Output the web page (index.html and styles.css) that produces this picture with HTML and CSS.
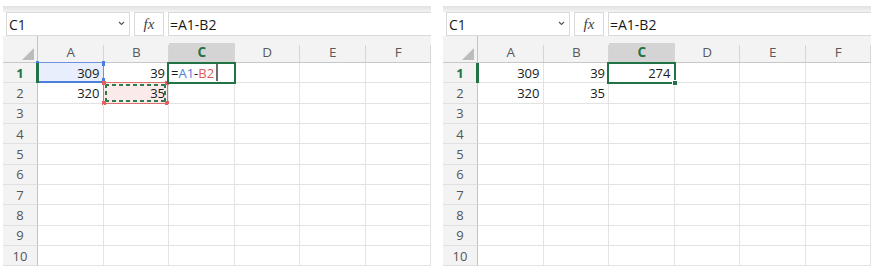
FILE: index.html
```html
<!DOCTYPE html>
<html lang="en">
<head>
  <meta charset="UTF-8" />
  <title>Formula =A1-B2</title>
  <link rel="stylesheet" href="styles.css">
</head>
<body>
  <div class="wrap">

    <!-- editing the formula -->
    <div class="panel">
      <div class="ribbon"></div>
      <div class="fbar">
        <div class="namebox">C1
          <svg class="chev" width="7" height="5" viewBox="0 0 7 5"><path d="M1 1l2.5 2.5L6 1" fill="none" stroke="#555" stroke-width="1.1"/></svg>
        </div>
        <div class="fx">fx</div>
        <div class="formula">=A1-B2</div>
      </div>
      <div class="sheet">
        <div class="row head">
          <div class="corner"></div>
          <div class="ch">A</div><div class="ch">B</div><div class="ch sel">C</div>
          <div class="ch">D</div><div class="ch">E</div><div class="ch">F</div>
        </div>
        <div class="row">
          <div class="rh sel">1</div>
          <div class="c ref-a">309
            <span class="box blue"><i class="tl"></i><i class="tr"></i><i class="bl"></i><i class="br"></i></span>
          </div>
          <div class="c">39</div>
          <div class="c edit">=<span class="ra">A1</span>-<span class="rb">B2</span><span class="caret"></span>
            <span class="active"></span>
          </div>
          <div class="c"></div><div class="c"></div><div class="c"></div>
        </div>
        <div class="row">
          <div class="rh">2</div>
          <div class="c">320</div>
          <div class="c ref-b">35
            <span class="box red"><span class="ants"></span><i class="tl"></i><i class="tr"></i><i class="bl"></i><i class="br"></i></span>
          </div>
          <div class="c"></div><div class="c"></div><div class="c"></div><div class="c"></div>
        </div>
        <div class="row"><div class="rh">3</div><div class="c"></div><div class="c"></div><div class="c"></div><div class="c"></div><div class="c"></div><div class="c"></div></div>
        <div class="row"><div class="rh">4</div><div class="c"></div><div class="c"></div><div class="c"></div><div class="c"></div><div class="c"></div><div class="c"></div></div>
        <div class="row"><div class="rh">5</div><div class="c"></div><div class="c"></div><div class="c"></div><div class="c"></div><div class="c"></div><div class="c"></div></div>
        <div class="row"><div class="rh">6</div><div class="c"></div><div class="c"></div><div class="c"></div><div class="c"></div><div class="c"></div><div class="c"></div></div>
        <div class="row"><div class="rh">7</div><div class="c"></div><div class="c"></div><div class="c"></div><div class="c"></div><div class="c"></div><div class="c"></div></div>
        <div class="row"><div class="rh">8</div><div class="c"></div><div class="c"></div><div class="c"></div><div class="c"></div><div class="c"></div><div class="c"></div></div>
        <div class="row"><div class="rh">9</div><div class="c"></div><div class="c"></div><div class="c"></div><div class="c"></div><div class="c"></div><div class="c"></div></div>
        <div class="row"><div class="rh">10</div><div class="c"></div><div class="c"></div><div class="c"></div><div class="c"></div><div class="c"></div><div class="c"></div></div>
      </div>
    </div>

    <!-- result -->
    <div class="panel">
      <div class="ribbon"></div>
      <div class="fbar">
        <div class="namebox">C1
          <svg class="chev" width="7" height="5" viewBox="0 0 7 5"><path d="M1 1l2.5 2.5L6 1" fill="none" stroke="#555" stroke-width="1.1"/></svg>
        </div>
        <div class="fx">fx</div>
        <div class="formula">=A1-B2</div>
      </div>
      <div class="sheet">
        <div class="row head">
          <div class="corner"></div>
          <div class="ch">A</div><div class="ch">B</div><div class="ch sel">C</div>
          <div class="ch">D</div><div class="ch">E</div><div class="ch">F</div>
        </div>
        <div class="row">
          <div class="rh sel">1</div>
          <div class="c">309</div>
          <div class="c">39</div>
          <div class="c">274<span class="active"><span class="handle"></span></span></div>
          <div class="c"></div><div class="c"></div><div class="c"></div>
        </div>
        <div class="row">
          <div class="rh">2</div>
          <div class="c">320</div>
          <div class="c">35</div>
          <div class="c"></div><div class="c"></div><div class="c"></div><div class="c"></div>
        </div>
        <div class="row"><div class="rh">3</div><div class="c"></div><div class="c"></div><div class="c"></div><div class="c"></div><div class="c"></div><div class="c"></div></div>
        <div class="row"><div class="rh">4</div><div class="c"></div><div class="c"></div><div class="c"></div><div class="c"></div><div class="c"></div><div class="c"></div></div>
        <div class="row"><div class="rh">5</div><div class="c"></div><div class="c"></div><div class="c"></div><div class="c"></div><div class="c"></div><div class="c"></div></div>
        <div class="row"><div class="rh">6</div><div class="c"></div><div class="c"></div><div class="c"></div><div class="c"></div><div class="c"></div><div class="c"></div></div>
        <div class="row"><div class="rh">7</div><div class="c"></div><div class="c"></div><div class="c"></div><div class="c"></div><div class="c"></div><div class="c"></div></div>
        <div class="row"><div class="rh">8</div><div class="c"></div><div class="c"></div><div class="c"></div><div class="c"></div><div class="c"></div><div class="c"></div></div>
        <div class="row"><div class="rh">9</div><div class="c"></div><div class="c"></div><div class="c"></div><div class="c"></div><div class="c"></div><div class="c"></div></div>
        <div class="row"><div class="rh">10</div><div class="c"></div><div class="c"></div><div class="c"></div><div class="c"></div><div class="c"></div><div class="c"></div></div>
      </div>
    </div>

  </div>
</body>
</html>
```

FILE: styles.css
```css
* {
  box-sizing: border-box;
}

body {
  margin: 0;
  background: #ffffff;
  font-family: 'Open Sans', sans-serif;
  color: #1a1a1a;
}

.wrap {
  display: flex;
  gap: 12px;
  padding: 6px 0 0 3px;
}

.panel {
  width: 428px;
}

.ribbon {
  height: 6px;
  background: linear-gradient(#e1e1e1, #f3f3f3);
}

/* formula bar */
.fbar {
  display: flex;
  gap: 4px;
  height: 24px;
  padding-left: 3px;
  font-size: 14px;
}

.namebox {
  width: 124px;
  border: 1px solid #dadada;
  display: flex;
  align-items: center;
  justify-content: space-between;
  padding: 0 4px 0 2px;
}

.chev {
  margin-top: -2px;
}

.fx {
  width: 30px;
  border: 1px solid #dadada;
  font-family: 'Liberation Serif', serif;
  font-style: italic;
  font-size: 15px;
  color: #444;
  display: flex;
  align-items: center;
  justify-content: center;
}

.formula {
  flex: 1;
  border: 1px solid #dadada;
  border-right: none;
  padding-left: 1px;
  display: flex;
  align-items: center;
}

/* grid */
.row {
  display: grid;
  grid-template-columns: 35px repeat(6, 65.5px);
  height: 20.33px;
}

.row.head {
  height: 27px;
  background: #f3f3f3;
  border-bottom: 1px solid #c8c8c8;
}

.corner {
  position: relative;
  border-right: 1px solid #c4c4c4;
}

.corner::after {
  content: '';
  position: absolute;
  right: 3px;
  bottom: 2px;
  border-left: 12px solid transparent;
  border-bottom: 12px solid #bcbcbc;
}

.ch {
  position: relative;
  padding-top: 7px;
  text-align: center;
  line-height: 19px;
  font-size: 13.5px;
  color: #5a5a5a;
}

.ch::after {
  content: '';
  position: absolute;
  right: 0;
  top: 9px;
  bottom: 0;
  width: 1px;
  background: #d6d6d6;
}

.ch.sel {
  background: linear-gradient(transparent 7px, #d4d4d4 7px);
  color: #217346;
  font-weight: 700;
}

.rh {
  position: relative;
  background: #f3f3f3;
  border-right: 1px solid #c4c4c4;
  border-bottom: 1px solid #e0e0e0;
  display: flex;
  align-items: center;
  justify-content: center;
  font-size: 13px;
  color: #555;
}

.rh.sel {
  color: #217346;
  font-weight: 700;
}

.rh.sel::after {
  content: '';
  position: absolute;
  right: -2px;
  top: 0;
  bottom: -1px;
  width: 3px;
  background: #217346;
  z-index: 3;
}

.c {
  position: relative;
  border-right: 1px solid #e3e3e3;
  border-bottom: 1px solid #e3e3e3;
  display: flex;
  align-items: center;
  justify-content: flex-end;
  padding-right: 3px;
  font-size: 13px;
}

.c.edit {
  justify-content: flex-start;
  padding-left: 2px;
}

.ra { color: #4a7fdb; }
.rb { color: #df5a55; }

.caret {
  display: inline-block;
  width: 2px;
  height: 17px;
  margin-left: 2px;
  background: #6a6a6a;
}

/* reference highlights */
.ref-a { background: #e8eefb; }
.ref-b { background: #fbeaea; }

.box {
  position: absolute;
  left: -1px;
  top: -1px;
  right: -1px;
  bottom: -1px;
}

.box.blue {
  border: 1px solid #6b95e0;
  border-bottom: 2px solid #4a7fdb;
}

.box.red {
  right: 0;
  border: 1px solid #e07070;
}

.box i {
  position: absolute;
  width: 3px;
  height: 5px;
  background: #4a7fdb;
}

.box.red i {
  width: 4px;
  height: 4px;
  background: #e06060;
}

.box .tl { left: -2px; top: -2px; }
.box .tr { right: -2px; top: -2px; }
.box .bl { left: -2px; bottom: -2px; }
.box .br { right: -2px; bottom: -2px; }

.ants {
  position: absolute;
  inset: 1px;
  background:
    repeating-linear-gradient(90deg, #2d7a4c 0 4px, transparent 4px 7px) top / 100% 2px no-repeat,
    repeating-linear-gradient(90deg, #2d7a4c 0 4px, transparent 4px 7px) bottom / 100% 2px no-repeat,
    repeating-linear-gradient(180deg, #2d7a4c 0 4px, transparent 4px 7px) left / 2px 100% no-repeat,
    repeating-linear-gradient(180deg, #2d7a4c 0 4px, transparent 4px 7px) right / 2px 100% no-repeat;
}

/* active cell */
.active {
  position: absolute;
  left: -2px;
  top: -1px;
  right: -2px;
  bottom: -2px;
  border: 2px solid #217346;
  z-index: 2;
}

.handle {
  position: absolute;
  right: -4px;
  bottom: -4px;
  width: 6px;
  height: 6px;
  background: #217346;
  border: 1px solid #ffffff;
}
```
